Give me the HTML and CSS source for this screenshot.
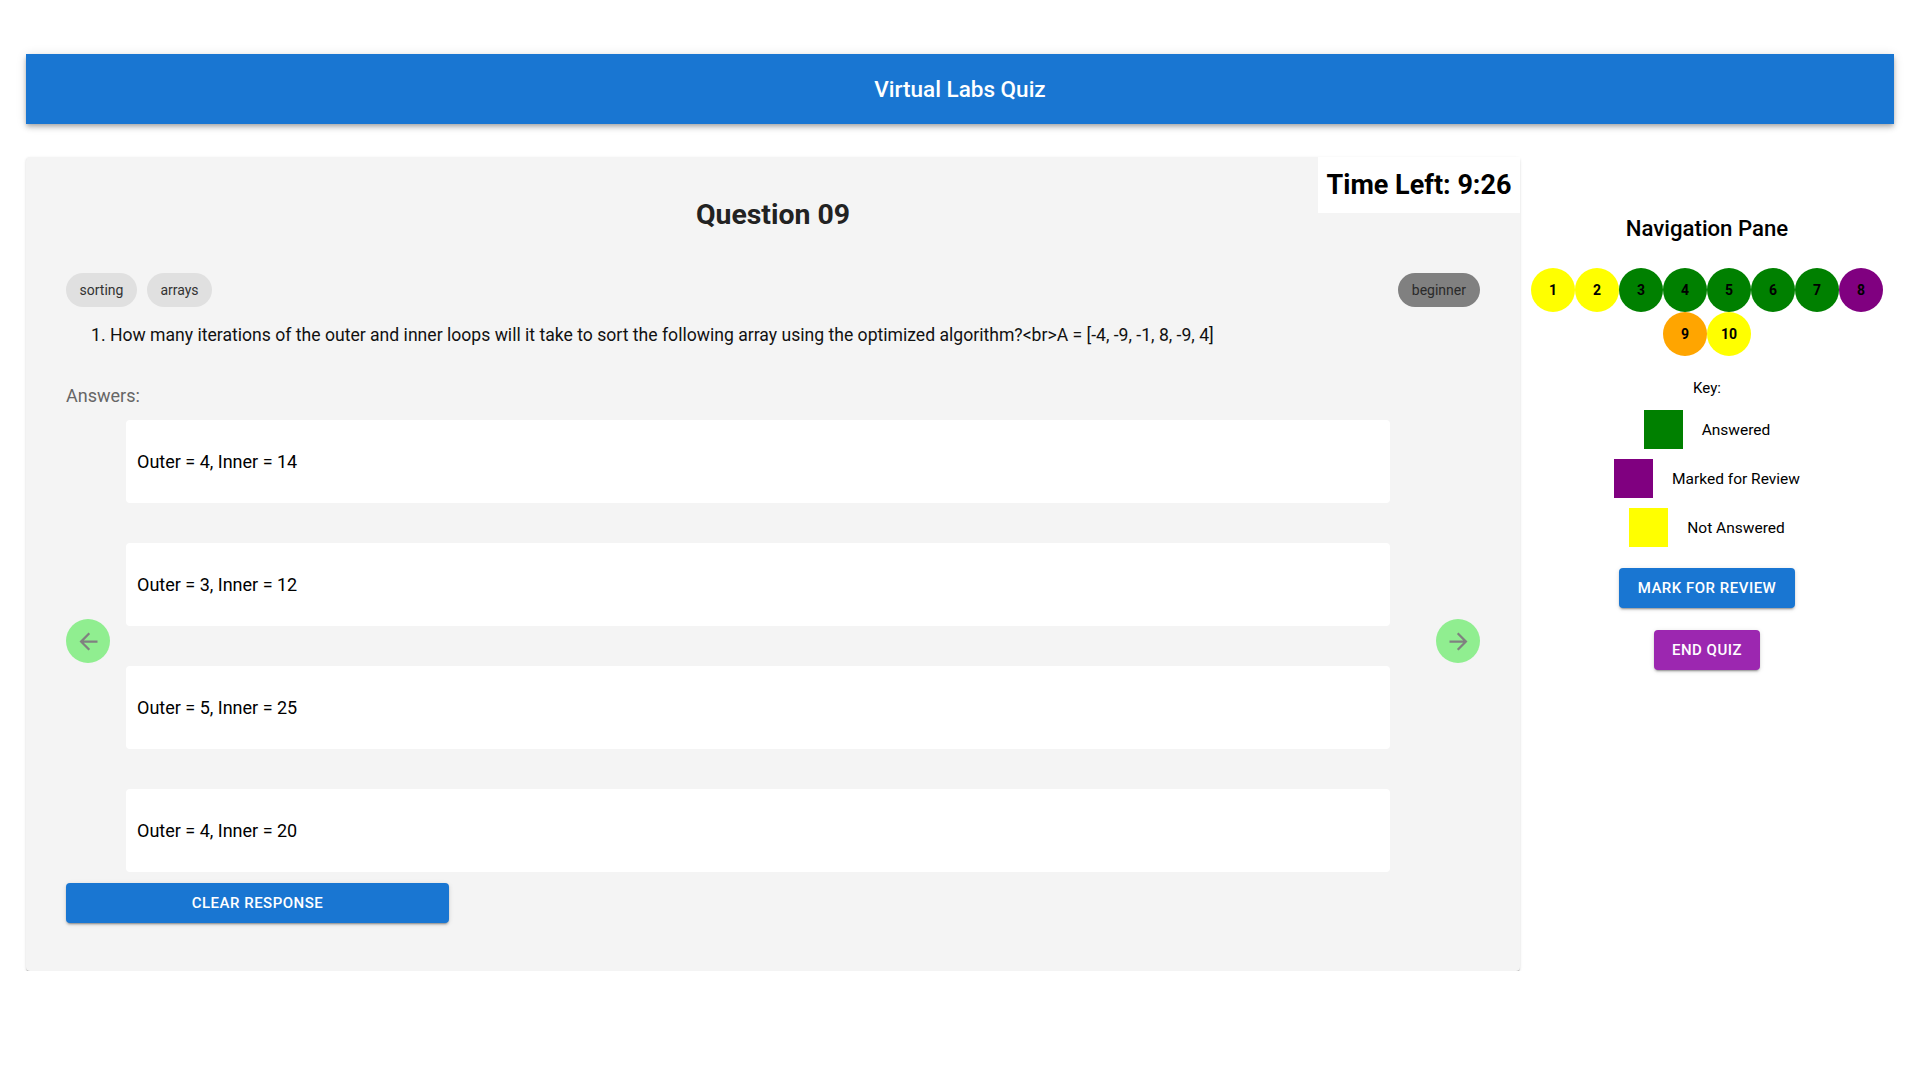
FILE: index.html
```
<!DOCTYPE html>
<html lang="en">
<head>
<meta charset="utf-8">
<title>Virtual Labs Quiz</title>
<link rel="stylesheet" href="styles.css">
</head>
<body>
<div class="page">
  <header class="appbar">Virtual Labs Quiz</header>
  <div class="main">
    <section class="card">
      <div class="timer">Time Left: 9:26</div>
      <h2 class="qtitle">Question 09</h2>
      <div class="chips">
        <div class="chip-group">
          <span class="chip">sorting</span>
          <span class="chip">arrays</span>
        </div>
        <span class="chip chip-level">beginner</span>
      </div>
      <p class="qtext">1. How many iterations of the outer and inner loops will it take to sort the following array using the optimized algorithm?&lt;br&gt;A = [-4, -9, -1, 8, -9, 4]</p>
      <div class="answers-label">Answers:</div>
      <div class="answers-row">
        <button class="arrow arrow-left" aria-label="previous">
          <svg viewBox="0 0 24 24" width="27" height="27"><path d="M20 11H7.83l5.59-5.59L12 4l-8 8 8 8 1.41-1.41L7.83 13H20v-2z"/></svg>
        </button>
        <div class="answers">
          <div class="answer">Outer = 4, Inner = 14</div>
          <div class="answer">Outer = 3, Inner = 12</div>
          <div class="answer">Outer = 5, Inner = 25</div>
          <div class="answer">Outer = 4, Inner = 20</div>
        </div>
        <button class="arrow arrow-right" aria-label="next">
          <svg viewBox="0 0 24 24" width="27" height="27"><path d="M12 4l-1.41 1.41L16.17 11H4v2h12.17l-5.58 5.59L12 20l8-8z"/></svg>
        </button>
      </div>
      <button class="btn btn-clear">Clear Response</button>
    </section>
    <aside class="nav">
      <h3 class="nav-title">Navigation Pane</h3>
      <div class="qnums">
        <span class="qnum c-yellow">1</span>
        <span class="qnum c-yellow">2</span>
        <span class="qnum c-green">3</span>
        <span class="qnum c-green">4</span>
        <span class="qnum c-green">5</span>
        <span class="qnum c-green">6</span>
        <span class="qnum c-green">7</span>
        <span class="qnum c-purple">8</span>
        <span class="qnum c-orange">9</span>
        <span class="qnum c-yellow">10</span>
      </div>
      <div class="key-label">Key:</div>
      <div class="key">
        <div class="key-item"><span class="swatch c-green"></span><span>Answered</span></div>
        <div class="key-item"><span class="swatch c-purple"></span><span>Marked for Review</span></div>
        <div class="key-item"><span class="swatch c-yellow"></span><span>Not Answered</span></div>
      </div>
      <button class="btn btn-review">Mark for Review</button>
      <button class="btn btn-end">End Quiz</button>
    </aside>
  </div>
</div>
</body>
</html>
```

FILE: styles.css
```
* { box-sizing: border-box; }
html, body { margin: 0; padding: 0; background: #fff; }
body { font-family: Roboto, "Liberation Sans", Arial, sans-serif; color: #000; }

.page { padding: 54px 16px 0 26px; }

.appbar {
  height: 70px;
  background: #1976d2;
  color: #fff;
  font-size: 22.5px;
  font-weight: 500;
  display: flex;
  align-items: center;
  justify-content: center;
  box-shadow: 0 2px 4px -1px rgba(0,0,0,0.2), 0 4px 5px 0 rgba(0,0,0,0.14), 0 1px 10px 0 rgba(0,0,0,0.12);
}

.main {
  display: flex;
  align-items: flex-start;
  margin-top: 33px;
}

.card {
  position: relative;
  width: 1494px;
  flex: 0 0 1494px;
  background: #f4f4f4;
  border-radius: 4px;
  box-shadow: 0 2px 1px -1px rgba(0,0,0,0.2), 0 1px 1px 0 rgba(0,0,0,0.14), 0 1px 3px 0 rgba(0,0,0,0.12);
  padding: 41px 40px 48px 40px;
}

.timer {
  position: absolute;
  top: 0;
  right: 0;
  width: 202px;
  height: 56px;
  background: #fff;
  font-size: 27px;
  font-weight: 700;
  display: flex;
  align-items: center;
  justify-content: center;
  color: #000;
}

.qtitle {
  margin: 0;
  text-align: center;
  font-size: 28.4px;
  font-weight: 700;
  line-height: 34px;
  color: #222;
}

.chips {
  display: flex;
  justify-content: space-between;
  align-items: center;
  margin-top: 41px;
}
.chip-group { display: flex; gap: 10px; }
.chip {
  height: 34px;
  display: inline-flex;
  align-items: center;
  padding: 0 13.5px;
  border-radius: 17px;
  background: #e0e0e0;
  color: #333;
  font-size: 14px;
}
.chip-level { background: #808080; color: #2a2a2a; padding: 0 14px; }

.qtext {
  margin: 15px 0 0 0;
  padding-left: 25px;
  font-size: 17.6px;
  line-height: 27px;
  color: #111;
}

.answers-label {
  margin-top: 33px;
  font-size: 18px;
  line-height: 27px;
  color: #666;
}

.answers-row {
  display: flex;
  align-items: center;
  margin-top: 11px;
}
.answers {
  flex: 1;
  display: flex;
  flex-direction: column;
  gap: 40px;
  margin: 0 46px 0 16px;
}
.answer {
  height: 83px;
  background: #fff;
  border-radius: 4px;
  display: flex;
  align-items: center;
  padding-left: 11px;
  font-size: 18px;
  color: #000;
}

.arrow {
  flex: 0 0 44px;
  width: 44px;
  height: 44px;
  border-radius: 50%;
  border: none;
  background: #90ee90;
  padding: 0;
  display: flex;
  align-items: center;
  justify-content: center;
  margin-bottom: 10px;
}
.arrow svg { fill: #808080; display: block; }

.btn {
  border: none;
  border-radius: 4px;
  color: #fff;
  font-family: Roboto, "Liberation Sans", Arial, sans-serif;
  font-weight: 500;
  text-transform: uppercase;
  letter-spacing: 0.5px;
  height: 40px;
  padding: 0 18px;
  font-size: 15px;
  box-shadow: 0 3px 1px -2px rgba(0,0,0,0.2), 0 2px 2px 0 rgba(0,0,0,0.14), 0 1px 5px 0 rgba(0,0,0,0.12);
}
.btn-clear {
  display: block;
  margin-top: 11px;
  width: 383px;
  background: #1976d2;
}

.nav {
  flex: 1;
  display: flex;
  flex-direction: column;
  align-items: center;
  padding-top: 58px;
}
.nav-title {
  margin: 0;
  font-size: 22.2px;
  font-weight: 500;
  line-height: 26px;
  color: #000;
}
.qnums {
  margin-top: 27px;
  width: 352px;
  display: flex;
  flex-wrap: wrap;
  justify-content: center;
}
.qnum {
  width: 44px;
  height: 44px;
  border-radius: 50%;
  display: flex;
  align-items: center;
  justify-content: center;
  font-size: 14px;
  font-weight: 700;
  color: #000;
}
.c-yellow { background: #ffff00; }
.c-green { background: #008000; }
.c-purple { background: #800080; }
.c-orange { background: #ffa500; }

.key-label {
  margin-top: 23px;
  font-size: 15px;
  line-height: 18px;
}
.key {
  margin-top: 13px;
  display: flex;
  flex-direction: column;
  align-items: center;
  gap: 10px;
}
.key-item {
  display: flex;
  align-items: center;
  gap: 19px;
  font-size: 15.5px;
}
.swatch { width: 39px; height: 39px; display: block; }

.btn-review {
  margin-top: 21px;
  background: #1976d2;
  width: 176px;
  padding: 0;
}
.btn-end {
  margin-top: 22px;
  background: #9c27b0;
  width: 106px;
  padding: 0;
}
```
